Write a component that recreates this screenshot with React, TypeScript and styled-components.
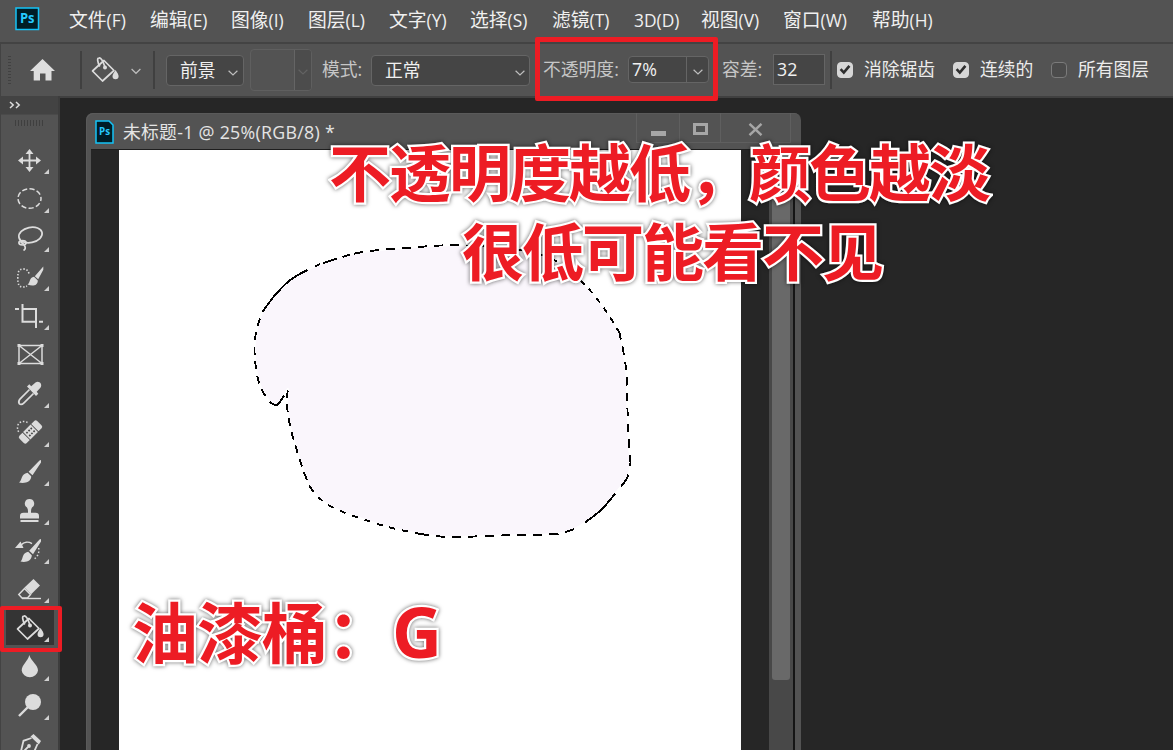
import React from 'react';
import styled, { createGlobalStyle, css } from 'styled-components';

const GlobalStyle = createGlobalStyle`
  * { box-sizing: border-box; }
  html, body { margin: 0; padding: 0; background: #262626; overflow: hidden; }
  #root { height: 750px; }
`;

const uiFont = css`
  font-family: 'Open Sans', 'Noto Sans CJK SC', sans-serif;
  font-weight: 400;
`;

const Screen = styled.div`
  position: relative;
  width: 1173px;
  height: 750px;
  display: flex;
  flex-direction: column;
  overflow: hidden;
  background: #262626;
  color: #f0f0f0;
  ${uiFont}
`;

const MenuBar = styled.nav`
  flex: none;
  height: 42px;
  display: flex;
  align-items: center;
  background: #535353;
  padding: 0 0 3px 15px;
`;

const AppLogo = styled.svg`
  width: 25px;
  height: 24px;
  margin: 0 29px 2px 0;
  flex: none;
`;

const MenuItem = styled.span<{ $w: number }>`
  width: ${p => p.$w}px;
  flex: none;
  white-space: nowrap;
  font-size: 18.8px;
  line-height: 26px;
`;

const Mnemonic = styled.span`
  font-size: 17.4px;
  letter-spacing: 0;
`;

const OptionsBar = styled.div`
  flex: none;
  height: 56px;
  display: flex;
  align-items: center;
  background: #535353;
  border-top: 2px solid #434343;
  border-bottom: 2px solid #404040;
  border-left: 1px solid #434343;
  padding-bottom: 1px;
  font-size: 17.8px;
`;

const Grip = styled.div`
  width: 3px;
  height: 28px;
  margin-left: 7px;
  background: repeating-linear-gradient(#414141 0 1px, #535353 1px 3px);
`;

const BarIcon = styled.svg<{ $w: number; $ml: number }>`
  width: ${p => p.$w}px;
  height: 28px;
  margin-left: ${p => p.$ml}px;
  flex: none;
`;

const Divider = styled.div<{ $ml: number }>`
  flex: none;
  width: 2px;
  height: 38px;
  margin-left: ${p => p.$ml}px;
  background: #404040;
`;

const Field = styled.div<{ $w: number; $h: number; $ml: number; $off?: boolean; $mt?: number; $square?: boolean }>`
  flex: none;
  display: flex;
  align-items: center;
  width: ${p => p.$w}px;
  height: ${p => p.$h}px;
  margin-left: ${p => p.$ml}px;
  margin-top: ${p => p.$mt ?? 0}px;
  border: 1px solid ${p => (p.$off ? '#5f5f5f' : '#656565')};
  border-radius: ${p => (p.$square ? 0 : 4)}px;
  background: ${p => (p.$off ? '#535353' : '#454545')};
  overflow: hidden;
`;

const FieldText = styled.span<{ $pl: number }>`
  flex: 1;
  padding: 0 0 2px ${p => p.$pl}px;
  white-space: nowrap;
  line-height: 26px;
`;

const FieldArrow = styled.span<{ $w: number; $split?: boolean; $off?: boolean }>`
  width: ${p => p.$w}px;
  height: 100%;
  display: flex;
  align-items: center;
  justify-content: center;
  padding-top: 4px;
  color: ${p => (p.$off ? '#626262' : '#bdbdbd')};
  background: ${p => (p.$off ? '#4c4c4c' : 'none')};
  border-left: ${p => (p.$split ? '1px solid #656565' : 'none')};
`;

const Label = styled.span<{ $ml: number; $w: number; $bright?: boolean }>`
  flex: none;
  width: ${p => p.$w}px;
  margin-left: ${p => p.$ml}px;
  margin-top: -3px;
  white-space: nowrap;
  color: ${p => (p.$bright ? '#ececec' : '#c6c6c6')};
`;

const Tick = styled.span<{ $ml: number; $on?: boolean }>`
  flex: none;
  display: flex;
  align-items: center;
  justify-content: center;
  width: 16px;
  height: 16px;
  margin-left: ${p => p.$ml}px;
  border-radius: 4px;
  border: 1px solid ${p => (p.$on ? '#d6d6d6' : '#7b7b7b')};
  background: ${p => (p.$on ? '#d6d6d6' : '#4b4b4b')};
`;

const Workspace = styled.div`
  flex: 1;
  display: flex;
  min-height: 0;
`;

const ToolPanel = styled.aside`
  flex: none;
  width: 60px;
  display: flex;
  flex-direction: column;
  background: #535353;
  border-left: 1px solid #434343;
  border-right: 2px solid #3d3d3d;
  overflow: hidden;
  margin-top: -2px;
`;

const PanelHead = styled.div`
  flex: none;
  height: 19px;
  background: #434343;
  border-bottom: 1px solid #4a4a4a;
  display: flex;
  align-items: center;
  padding-left: 8px;
`;

const PanelGrip = styled.div`
  flex: none;
  width: 29px;
  height: 6px;
  margin: 5px 0 15px 14px;
  background: repeating-linear-gradient(90deg, #3f3f3f 0 1px, #535353 1px 3px);
`;

const ToolCell = styled.div<{ $active?: boolean }>`
  flex: none;
  height: 39px;
  width: 57px;
  display: flex;
  ${p => p.$active && css`
    background: linear-gradient(#343434, #343434) 5px 0 / 48px 36px no-repeat;
  `}
`;

const ToolSvg = styled.svg`
  width: 57px;
  height: 39px;
  color: #dcdcdc;
`;

const DocWindow = styled.section`
  width: 715px;
  margin: 15px 0 0 26px;
  display: flex;
  flex-direction: column;
  background: #535353;
  border-radius: 7px 7px 0 0;
  box-shadow: inset 1px 1px 0 #5a5a5a;
`;

const TitleBar = styled.header`
  flex: none;
  height: 36px;
  display: flex;
  align-items: flex-start;
  padding-left: 9px;
`;

const DocTitle = styled.span`
  margin: 6px 0 0 9px;
  width: 509px;
  font-size: 17.8px;
  letter-spacing: 0.28px;
  line-height: 26px;
  white-space: nowrap;
  color: #e4e4e4;
`;

const DocButtons = styled.div`
  display: flex;
  height: 30px;
  border: 1px solid #5f5f5f;
  border-top: 0;
  margin-left: 4px;
`;

const DocButton = styled.span<{ $w: number }>`
  width: ${p => p.$w}px;
  display: flex;
  align-items: center;
  justify-content: center;
  padding-top: 3px;
  color: #a6a6a6;
  & + & { border-left: 1px solid #5f5f5f; }
`;

const DocBody = styled.div`
  flex: 1;
  display: flex;
  margin: 0 6px 0 5px;
  padding-left: 28px;
  background: #262626;
  border-top: 1px solid #1e1e1e;
`;

const Canvas = styled.div`
  width: 622px;
  height: 600px;
  background: #fff;
`;

const ScrollTrack = styled.div`
  margin-left: 28px;
  width: 24px;
  background: #484848;
  padding-left: 3px;
`;

const ScrollThumb = styled.div`
  width: 18px;
  height: 530px;
  background: #696969;
  border-radius: 0 0 3px 3px;
`;

const ScrollEdge = styled.div`
  width: 2px;
  background: #151515;
`;

const Frame = styled.div<{ $x: number; $y: number; $w: number; $h: number; $b: number }>`
  position: absolute;
  left: ${p => p.$x}px;
  top: ${p => p.$y}px;
  width: ${p => p.$w}px;
  height: ${p => p.$h}px;
  border: ${p => p.$b}px solid #ed1c24;
  border-radius: 2px;
`;

const Caption = styled.div<{ $x: number; $y: number; $size: number; $track: number }>`
  position: absolute;
  left: ${p => p.$x}px;
  top: ${p => p.$y}px;
  font-family: 'Noto Sans CJK SC', sans-serif;
  font-weight: 700;
  font-size: ${p => p.$size}px;
  letter-spacing: ${p => p.$track}px;
  line-height: 80px;
  white-space: nowrap;
  color: #ed1c24;
  -webkit-text-stroke: 4.5px #fff;
  paint-order: stroke fill;
  filter: drop-shadow(0 0 2px rgba(0, 0, 0, 0.6));
`;

const CaptionInk = styled.span`
  position: absolute;
  inset: 0;
  -webkit-text-stroke: 0.9px #ed1c24;
`;

const KeyName = styled.span`
  font-family: 'Open Sans', sans-serif;
  font-size: 69px;
  line-height: 1;
`;

const Chevron = () => (
  <svg width="10" height="6" viewBox="0 0 10 6">
    <path d="M.6.7 5 5 9.4.7" fill="none" stroke="currentColor" strokeWidth="1.2" />
  </svg>
);

const Check = () => (
  <svg width="12" height="11" viewBox="0 0 12 11">
    <path d="M1.6 5.2 4.8 8.6 10.4 1.8" fill="none" stroke="#2e2e2e" strokeWidth="2.6" />
  </svg>
);

const BucketShape = () => (
  <g>
    <g fill="none" stroke="currentColor" strokeWidth="1.7" strokeLinejoin="round">
      <path d="M29 618.5 39 628.5 27.5 639 17.5 629Z" />
      <path d="M24.8 624.5C22.5 620 21.8 616 24 615.8C26.5 615.5 28 619 29.8 624.5" />
    </g>
    <circle cx="30" cy="625.5" r="2" fill="currentColor" />
    <path d="M40.5 628C42.5 631 43.6 632.6 43.6 634.2A3 3 0 0 1 37.5 634.2C37.5 632.6 38.9 631 40.5 628Z" fill="currentColor" />
  </g>
);

const line = { fill: 'none', stroke: 'currentColor' } as const;
const solid = { fill: 'currentColor' } as const;

type Tool = { name: string; plain?: boolean; active?: boolean; art: React.ReactNode };

const tools: Tool[] = [
  { name: 'move', art: <g>
    <path d="M29.5 152V169M21 160.5H38" {...line} strokeWidth="1.8" />
    <path d="M29.5 149 33.5 154H25.5ZM29.5 172 33.5 167H25.5ZM18 160.5 23 156.5V164.5ZM41 160.5 36 156.5V164.5Z" {...solid} />
  </g> },
  { name: 'marquee', art: <ellipse cx="29.5" cy="198.5" rx="11.5" ry="9.8" {...line} strokeWidth="1.5" strokeDasharray="5.2 2.3" strokeDashoffset="2.6" /> },
  { name: 'lasso', art: <g {...line} strokeWidth="1.7">
    <ellipse cx="30.5" cy="235" rx="11.8" ry="7.6" transform="rotate(-12 30.5 235)" />
    <ellipse cx="22.5" cy="242.8" rx="3.6" ry="2.2" />
    <path d="M20.5 241.5C23 243.5 26 246 25.2 248.5C25 249.6 24 250 23.5 250.5" />
  </g> },
  { name: 'quick', art: <g>
    <path d="M29 273.500C28 270 26 269 23.500 269C18.500 269 17.800 272 17.800 278C17.800 284.500 19 287 23 287C24.500 287 25.500 286.800 27 286" {...line} strokeWidth="1.6" strokeDasharray="1.5 1.7" />
    <path d="M43.3 266.5V269.8L38.2 279.2 34.8 276.2ZM34 276.8 37.8 280.4C37.8 285 33.500 287 27.500 284.500C30.500 283 29 277.500 34 276.8Z" {...solid} />
  </g> },
  { name: 'crop', art: <path d="M22.500 304V321.800H36.500M39 321.800H43M15 309H19M22.500 309H36V328" {...line} strokeWidth="2" /> },
  { name: 'frame', plain: true, art: <g>
    <path d="M19 345.500H42V363.500H19ZM19 345.500 42 363.500M42 345.500 19 363.500" {...line} strokeWidth="1.5" />
    <path d="M17.500 344H20.500V347H17.500ZM40.500 344H43.500V347H40.500ZM17.500 362H20.500V365H17.500ZM40.500 362H43.500V365H40.500Z" {...solid} />
  </g> },
  { name: 'eyedropper', art: <g>
    <path d="M29.500 389.500 20.200 398.800C18.800 400.500 18.500 402.500 19.200 403.600C20.500 404.800 22.500 404.300 24 402.800L33.500 393.500" {...line} strokeWidth="1.7" />
    <path d="M27 386.500 29.300 384.300 31.200 386.200 35.500 382.500C39 380.300 42.800 384 40.600 387.600L36.700 391.800 38.300 393.800 36 396Z" {...solid} />
  </g> },
  { name: 'heal', art: <g>
    <path d="M27.500 422.500C24 420.500 19 421.500 17.800 425.500C17 429 18 431 19.500 433" {...line} strokeWidth="1.5" strokeDasharray="1.5 1.8" />
    <g transform="rotate(-45 30.5 432)">
      <path d="M20 426.800H24.300V437.200H20Q18 437.200 18 435V429Q18 426.800 20 426.800ZM36.700 426.800H41Q43 426.800 43 429V435Q43 437.200 41 437.200H36.700ZM25.200 426.800H35.800V437.200H25.200Z" {...solid} />
      <path d="M26.700 430H35M26.700 434H35" stroke="#484848" strokeWidth="1.7" strokeDasharray="1.7 1.3" />
    </g>
  </g> },
  { name: 'brush', art: <path d="M41 460V462.500L32.500 475.300 28.600 471.800 39.500 460.500ZM27.600 472.800 31.200 476.300C31.500 481.500 25.500 484 19 482.600C22.500 480.500 20.500 474 27.600 472.800Z" {...solid} /> },
  { name: 'stamp', art: <path d="M29.500 499A4.600 4.600 0 0 1 32 507.500Q31 509 31 511.500V512.800H35.500Q39 512.800 39 516V518.500H20V516Q20 512.800 23.500 512.800H28V511.500Q28 509 27 507.500A4.600 4.600 0 0 1 29.500 499ZM20.500 520H38.500V522H20.500Z" {...solid} /> },
  { name: 'history', art: <g>
    <path d="M41 539V541.500L33 554.300 29.200 550.800 39.500 539.500ZM28.200 551.800 31.800 555.300C31.800 560.500 26.500 563 20.500 561.600C23.500 559.500 21.500 553 28.200 551.800ZM15 548 20.500 541.500 23.500 548Z" {...solid} />
    <path d="M21 545C24 541.800 28.500 541.600 32 543.600" {...line} strokeWidth="1.5" />
    <path d="M38.700 548C39.500 553 37.500 557.500 33 559.500" {...line} strokeWidth="1.5" strokeDasharray="1.5 2" />
  </g> },
  { name: 'eraser', art: <g>
    <path d="M33.500 579 40 585.500 31.200 594.200 24.500 587.500Z" {...solid} />
    <path d="M24.500 588.500 30.500 594.500 27.500 598H22L18.800 594.500Z" {...line} strokeWidth="1.5" />
    <path d="M22 598.500H41" {...line} strokeWidth="1.4" />
  </g> },
  { name: 'bucket', active: true, art: <BucketShape /> },
  { name: 'blur', art: <path d="M29.300 655C31 661 38 665 38 670.500A8.200 7.600 0 0 1 21.700 670.500C21.700 665 28 661 29.300 655Z" {...solid} /> },
  { name: 'dodge', art: <g><circle cx="33" cy="702" r="8" {...solid} /><path d="M28 707 19 716" {...line} strokeWidth="2.4" /></g> },
  { name: 'pen', art: <g>
    <path d="M33.500 734 41 741 38.800 744.500 30.500 736.500Z" {...solid} />
    <path d="M31.500 738 23.500 740.800 19.800 756M37.500 744 34 752M21 754 28 747" {...line} strokeWidth="1.8" />
    <circle cx="29" cy="746" r="1.9" {...solid} />
  </g> },
];

const menus: [string, string, number][] = [
  ['文件', '(F)', 81], ['编辑', '(E)', 81], ['图像', '(I)', 77], ['图层', '(L)', 81],
  ['文字', '(Y)', 81], ['选择', '(S)', 82], ['滤镜', '(T)', 82], ['', '3D(D)', 67],
  ['视图', '(V)', 82], ['窗口', '(W)', 89], ['帮助', '(H)', 80],
];

type Pt = [number, number];

/* Smooth curve through the given points (Catmull-Rom as cubic Béziers). */
const curve = (pts: Pt[], head = 'M') =>
  pts.slice(0, -1).reduce((d, p, i) => {
    const a = pts[i - 1] ?? p;
    const b = pts[i + 1];
    const c = pts[i + 2] ?? b;
    const n = (v: number) => v.toFixed(1);
    return d + `C${n(p[0] + (b[0] - a[0]) / 6)} ${n(p[1] + (b[1] - a[1]) / 6)} ${n(b[0] - (c[0] - p[0]) / 6)} ${n(b[1] - (c[1] - p[1]) / 6)} ${b[0]} ${b[1]}`;
  }, `${head}${pts[0][0]} ${pts[0][1]}`);

const leftLobe: Pt[] = [[470, 245.5], [441, 245.5], [405, 248], [370, 251], [350, 254.5], [320, 264], [293, 278], [276, 294], [263, 311], [256.5, 330], [254.5, 350], [257, 375], [262, 390], [270, 402], [276, 405.5], [280, 402], [288, 388.5]];
const lowerEdge: Pt[] = [[288, 388.5], [287, 400], [288, 415], [291.5, 432], [297, 451], [305, 475], [310, 487], [318, 497], [332, 507], [355, 516.5], [388, 527], [420, 534], [450, 537], [500, 535.5], [548, 534.5], [566, 532], [580, 526], [600, 511], [614, 495], [627, 478], [630.5, 463], [629, 445], [627.5, 410], [626.5, 375], [624, 355], [619.5, 333], [610, 317], [594, 295], [580, 280], [563, 265], [541, 255], [508, 248], [470, 245.5]];

const antsDash: { pts: Pt[]; dash: string; offset?: number }[] = [
  { pts: leftLobe.slice(0, 5), dash: '9 7', offset: 5 },
  { pts: leftLobe.slice(4, 6), dash: '14 6', offset: 6 },
  { pts: leftLobe.slice(5, 9), dash: '18 8 62 9', offset: 12 },
  { pts: leftLobe.slice(8, 15), dash: '8 6.5', offset: -8 },
  { pts: leftLobe.slice(14), dash: '13 20' },
  { pts: lowerEdge.slice(0, 7), dash: '8 6', offset: -2 },
  { pts: lowerEdge.slice(6, 12), dash: '6 7' },
  { pts: lowerEdge.slice(11, 17), dash: '9 7.2' },
  { pts: lowerEdge.slice(16, 19), dash: '8 6 60 4', offset: 8 },
  { pts: lowerEdge.slice(18, 21), dash: '14 9', offset: 12 },
  { pts: lowerEdge.slice(20, 26), dash: '8.5 7' },
  { pts: lowerEdge.slice(25), dash: '6 6' },
];

const Selection = () => (
  <svg width="622" height="600" viewBox="119 150 622 600" style={{ display: 'block' }}>
    <path d={curve(leftLobe) + curve(lowerEdge, 'L') + 'Z'} fill="#faf6fc" stroke="#fff" strokeWidth="2" />
    {antsDash.map((a, i) => (
      <path key={i} d={curve(a.pts)} fill="none" stroke="#000" strokeWidth="1.9" strokeDasharray={a.dash} strokeDashoffset={a.offset ?? 0} shapeRendering="crispEdges" />
    ))}
  </svg>
);

const LogoText = styled.text`
  font-family: 'Open Sans', sans-serif;
  font-weight: 700;
  fill: #26c9ff;
`;

export default function App() {
  return (
    <>
      <GlobalStyle />
      <Screen>
        <MenuBar>
          <AppLogo viewBox="0 0 25 24">
            <rect x="1" y="1" width="22.5" height="21.5" fill="#001d26" stroke="#14c3f8" strokeWidth="1.5" />
            <LogoText x="5" y="16" fontSize="13.5" textLength="14.5" lengthAdjust="spacingAndGlyphs">Ps</LogoText>
          </AppLogo>
          {menus.map(([label, key, w]) => (
            <MenuItem key={key} $w={w}>{label}<Mnemonic>{key}</Mnemonic></MenuItem>
          ))}
        </MenuBar>

        <OptionsBar>
          <Grip />
          <BarIcon $w={26} $ml={19} viewBox="0 0 26 28">
            <path d="M12.500 3 25 15H21.500V24.500H15.500V17.500H10V24.500H3.700V15H0Z" fill="#dedede" />
          </BarIcon>
          <Divider $ml={24} />
          <BarIcon $w={28} $ml={9} viewBox="16 614 28 28" color="#dcdcdc"><BucketShape /></BarIcon>
          <BarIcon $w={10} $ml={12} viewBox="0 0 10 28">
            <path d="M.6 13 5 17.3 9.4 13" fill="none" stroke="#bdbdbd" strokeWidth="1.2" />
          </BarIcon>
          <Divider $ml={12} />
          <Field $w={78} $h={31} $ml={11} $mt={2}>
            <FieldText $pl={13}>前景</FieldText>
            <FieldArrow $w={21}><Chevron /></FieldArrow>
          </Field>
          <Field $w={62} $h={42} $ml={6} $off>
            <FieldText $pl={0} />
            <FieldArrow $w={17} $split $off><Chevron /></FieldArrow>
          </Field>
          <Label $ml={10} $w={49}>模式:</Label>
          <Field $w={159} $h={31} $ml={0} $mt={2}>
            <FieldText $pl={13}>正常</FieldText>
            <FieldArrow $w={19}><Chevron /></FieldArrow>
          </Field>
          <Label $ml={13} $w={85}>不透明度:</Label>
          <Field $w={81} $h={27} $ml={0}>
            <FieldText $pl={3}>7%</FieldText>
            <FieldArrow $w={22} $split><Chevron /></FieldArrow>
          </Field>
          <Label $ml={13} $w={51}>容差:</Label>
          <Field $w={52} $h={31} $ml={0} $square>
            <FieldText $pl={3}>32</FieldText>
          </Field>
          <Divider $ml={5} />
          <Tick $ml={5} $on><Check /></Tick>
          <Label $ml={11} $w={72} $bright>消除锯齿</Label>
          <Tick $ml={17} $on><Check /></Tick>
          <Label $ml={11} $w={54} $bright>连续的</Label>
          <Tick $ml={17} />
          <Label $ml={11} $w={72} $bright>所有图层</Label>
        </OptionsBar>

        <Workspace>
          <ToolPanel>
            <PanelHead>
              <svg width="12" height="8" viewBox="0 0 12 8">
                <path d="M1 1 4.200 4 1 7M7 1 10.200 4 7 7" fill="none" stroke="#dcdcdc" strokeWidth="1.5" />
              </svg>
            </PanelHead>
            <PanelGrip />
            {tools.map((t, i) => (
              <ToolCell key={t.name} $active={t.active}>
                <ToolSvg viewBox={`1 ${141 + i * 39} 57 39`}>
                  {t.art}
                  {!t.plain && <path d="M49 28V33H44Z" transform={`translate(0 ${141 + i * 39})`} fill="#d0d0d0" />}
                </ToolSvg>
              </ToolCell>
            ))}
          </ToolPanel>

          <DocWindow>
            <TitleBar>
              <svg width="19" height="24" viewBox="0 0 19 24" style={{ marginTop: 7 }}>
                <path d="M1 1H14L18 5V23H1Z" fill="#001d26" stroke="#14c3f8" strokeWidth="1.5" />
                <LogoText x="4" y="15" fontSize="10" textLength="11" lengthAdjust="spacingAndGlyphs">Ps</LogoText>
              </svg>
              <DocTitle>未标题-1 @ 25%(RGB/8) *</DocTitle>
              <DocButtons>
                <DocButton $w={42}>
                  <svg width="15" height="14"><rect y="9" width="15" height="5" fill="currentColor" /></svg>
                </DocButton>
                <DocButton $w={41}>
                  <svg width="15" height="12"><rect x="1.5" y="1.5" width="12" height="9" fill="none" stroke="currentColor" strokeWidth="3" /></svg>
                </DocButton>
                <DocButton $w={70}>
                  <svg width="15" height="13" viewBox="0 0 15 13"><path d="M1.500.8 13.500 12.200M13.500.8 1.500 12.200" stroke="currentColor" strokeWidth="2.4" /></svg>
                </DocButton>
              </DocButtons>
            </TitleBar>
            <DocBody>
              <Canvas><Selection /></Canvas>
              <ScrollTrack><ScrollThumb /></ScrollTrack>
              <ScrollEdge />
            </DocBody>
          </DocWindow>
        </Workspace>

        <Frame $x={535} $y={37} $w={183} $h={64} $b={5} />
        <Frame $x={0} $y={606} $w={62} $h={46} $b={4} />
        <Caption $x={329} $y={130} $size={62} $track={-2}>不透明度越低，颜色越淡</Caption>
        <Caption $x={462} $y={209} $size={62} $track={-2}>很低可能看不见</Caption>
        <Caption $x={132} $y={589} $size={66} $track={-1}>油漆桶：<KeyName>G</KeyName></Caption>
      </Screen>
    </>
  );
}
